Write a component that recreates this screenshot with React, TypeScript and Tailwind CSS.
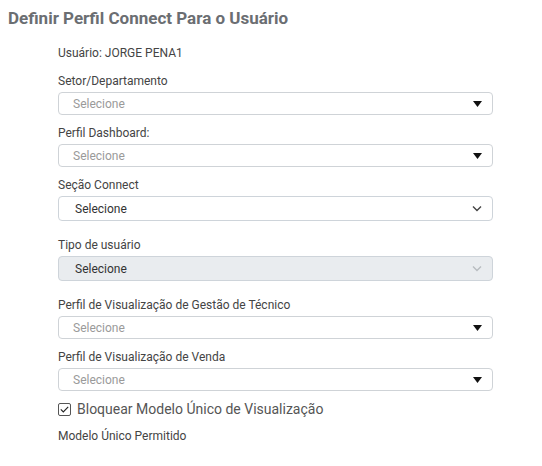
import React from 'react';

function Caret() {
  return (
    <svg width="9" height="6" viewBox="0 0 9 6" className="shrink-0">
      <path d="M0 0 L9 0 L4.5 6 Z" fill="#111" />
    </svg>
  );
}

function Chevron({ faded }: { faded?: boolean }) {
  return (
    <svg width="10" height="7" viewBox="0 0 10 7" className="shrink-0">
      <path d="M1 1.5 L5 5.5 L9 1.5" fill="none" stroke={faded ? '#b8bcc0' : '#444'} strokeWidth="1.4" />
    </svg>
  );
}

function FakeSelect({ variant }: { variant: 'caret' | 'native' | 'disabled' }) {
  if (variant === 'caret') {
    return (
      <div className="flex items-center justify-between h-[23px] pl-[14px] pr-[10px] border border-[#cfd3d7] rounded-[4px] bg-white">
        <span className="text-[12px] text-[#9a9a9a]">Selecione</span>
        <Caret />
      </div>
    );
  }
  return (
    <div
      className={
        variant === 'disabled'
          ? 'flex items-center justify-between h-[25px] pl-[16px] pr-[10px] border border-[#ced4da] rounded-[4px] bg-[#e9ecef]'
          : 'flex items-center justify-between h-[25px] pl-[16px] pr-[10px] border border-[#ced4da] rounded-[4px] bg-white'
      }
    >
      <span className="text-[12px] text-[#333]">Selecione</span>
      <Chevron faded={variant === 'disabled'} />
    </div>
  );
}

function Label({ children, className = '' }: { children: React.ReactNode; className?: string }) {
  return <p className={'text-[12px] text-[#444] leading-[14px] ' + className}>{children}</p>;
}

export default function App() {
  return (
    <div className="w-[542px] h-[466px] bg-white overflow-hidden font-['Roboto','Liberation_Sans',sans-serif]">
      <h1 className="pl-[8px] pt-[8px] text-[17px] font-bold text-[#6b6e72] leading-[20px]">
        Definir Perfil Connect Para o Usuário
      </h1>

      <div className="pl-[58px] pr-[49px]">
        <Label className="mt-[18px]">Usuário: JORGE PENA1</Label>

        <Label className="mt-[14px]">Setor/Departamento</Label>
        <div className="mt-[4px]"><FakeSelect variant="caret" /></div>

        <Label className="mt-[11px]">Perfil Dashboard:</Label>
        <div className="mt-[4px]"><FakeSelect variant="caret" /></div>

        <Label className="mt-[11px]">Seção Connect</Label>
        <div className="mt-[4px]"><FakeSelect variant="native" /></div>

        <Label className="mt-[17px]">Tipo de usuário</Label>
        <div className="mt-[4px]"><FakeSelect variant="disabled" /></div>

        <Label className="mt-[17px]">Perfil de Visualização de Gestão de Técnico</Label>
        <div className="mt-[4px]"><FakeSelect variant="caret" /></div>

        <Label className="mt-[11px]">Perfil de Visualização de Venda</Label>
        <div className="mt-[4px]"><FakeSelect variant="caret" /></div>

        <div className="mt-[9px] flex items-center gap-[6px]">
          <span className="w-[13px] h-[13px] border border-[#555] rounded-[2px] flex items-center justify-center bg-white">
            <svg width="9" height="7" viewBox="0 0 9 7">
              <path d="M0.8 3.4 L3.3 6 L8.2 0.8" fill="none" stroke="#222" strokeWidth="1.1" />
            </svg>
          </span>
          <span className="text-[14px] text-[#555] leading-[18px]">Bloquear Modelo Único de Visualização</span>
        </div>

        <Label className="mt-[11px]">Modelo Único Permitido</Label>
      </div>
    </div>
  );
}
